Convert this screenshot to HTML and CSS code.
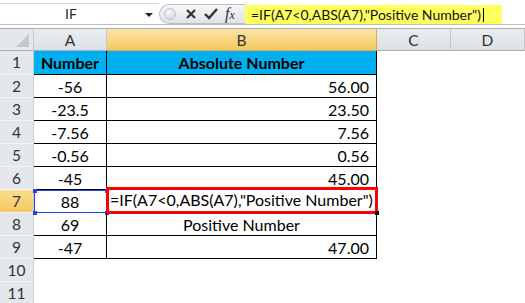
FILE: index.html
```html
<!DOCTYPE html>
<html lang="en">
<head>
    <meta charset="UTF-8">
    <title>IF ABS formula</title>
    <link rel="stylesheet" href="styles.css">
</head>
<body>
    <!-- formula bar -->
    <div class="formula-bar">
        <div class="name-box">IF<span class="name-arrow"></span></div>
        <div class="fx-buttons">
            <span class="grip"></span>
            <svg class="btn-icon" width="14" height="14" viewBox="0 0 14 14">
                <path d="M3 3 L11 11 M11 3 L3 11" stroke="#333" stroke-width="2.2" fill="none"/>
            </svg>
            <svg class="btn-icon" width="16" height="14" viewBox="0 0 16 14">
                <path d="M2 7 L6 11 L14 2" stroke="#333" stroke-width="2.4" fill="none"/>
            </svg>
            <span class="fx">f<span class="fx-x">x</span></span>
        </div>
        <div class="formula-input">=IF(A7&lt;0,ABS(A7),"Positive Number")<span class="caret"></span></div>
    </div>

    <!-- sheet -->
    <div class="sheet">
        <div class="corner"><span class="corner-tri"></span></div>
        <div class="col-head">A</div>
        <div class="col-head active">B</div>
        <div class="col-head">C</div>
        <div class="col-head last">D</div>

        <div class="row-head">1</div>
        <div class="cell title a">Number</div>
        <div class="cell title b">Absolute Number</div>
        <div class="blank"></div><div class="blank"></div>

        <div class="row-head">2</div>
        <div class="cell a">-56</div>
        <div class="cell b num">56.00</div>
        <div class="blank"></div><div class="blank"></div>

        <div class="row-head">3</div>
        <div class="cell a">-23.5</div>
        <div class="cell b num">23.50</div>
        <div class="blank"></div><div class="blank"></div>

        <div class="row-head">4</div>
        <div class="cell a">-7.56</div>
        <div class="cell b num">7.56</div>
        <div class="blank"></div><div class="blank"></div>

        <div class="row-head">5</div>
        <div class="cell a">-0.56</div>
        <div class="cell b num">0.56</div>
        <div class="blank"></div><div class="blank"></div>

        <div class="row-head">6</div>
        <div class="cell a">-45</div>
        <div class="cell b num">45.00</div>
        <div class="blank"></div><div class="blank"></div>

        <div class="row-head active">7</div>
        <div class="cell a ref">88
            <span class="ref-box">
                <span class="handle tl"></span><span class="handle tr"></span>
                <span class="handle bl"></span><span class="handle br"></span>
            </span>
        </div>
        <div class="cell b editing">
            <span class="edit-box">=IF(A7&lt;0,ABS(A7),"Positive Number")</span>
            <span class="fill-handle"></span>
        </div>
        <div class="blank"></div><div class="blank"></div>

        <div class="row-head">8</div>
        <div class="cell a">69</div>
        <div class="cell b">Positive Number</div>
        <div class="blank"></div><div class="blank"></div>

        <div class="row-head">9</div>
        <div class="cell a">-47</div>
        <div class="cell b num">47.00</div>
        <div class="blank"></div><div class="blank"></div>

        <div class="row-head">10</div>
        <div class="blank"></div><div class="blank"></div><div class="blank"></div><div class="blank"></div>

        <div class="row-head">11</div>
        <div class="blank"></div><div class="blank"></div><div class="blank"></div><div class="blank"></div>
    </div>
</body>
</html>
```

FILE: styles.css
```css
body {
    margin: 0;
    background: #fff;
    font-family: Lato, "Liberation Sans", sans-serif;
    width: 525px;
    height: 303px;
    overflow: hidden;
}

/* formula bar */
.formula-bar {
    display: flex;
    align-items: flex-start;
    height: 21px;
    padding-top: 3px;
    border-bottom: 1px solid #b9c0c8;
    margin-bottom: 3px;
}
.name-box {
    position: relative;
    box-sizing: border-box;
    width: 159px;
    height: 21px;
    border-top: 1px solid #d6dade;
    padding-right: 17px;
    text-align: center;
    font-size: 14px;
    line-height: 20px;
    color: #2b2b2b;
}
.name-arrow {
    position: absolute;
    right: 6px;
    top: 9px;
    border-left: 4px solid transparent;
    border-right: 4px solid transparent;
    border-top: 4px solid #222;
}
.fx-buttons {
    box-sizing: border-box;
    width: 86px;
    height: 20px;
    margin-top: 1px;
    display: flex;
    align-items: center;
    border: 1px solid #b9bfc7;
    border-right: none;
    border-radius: 10px 0 0 10px;
    background: linear-gradient(#f6f7f9, #dfe2e6);
}
.grip {
    width: 10px;
    height: 10px;
    margin-left: 4px;
    margin-right: 8px;
    border-radius: 50%;
    background: radial-gradient(circle at 40% 35%, #fafafa, #c9cdd2);
    border: 1px solid #c2c6cb;
}
.btn-icon {
    margin-right: 5px;
}
.fx {
    font-family: "Liberation Serif", serif;
    font-style: italic;
    font-size: 16px;
    color: #333;
    margin-left: 1px;
}
.fx-x {
    font-size: 12px;
}
.formula-input {
    box-sizing: border-box;
    width: 257px;
    height: 19px;
    margin-top: 2px;
    padding-left: 6px;
    background: #ffff5e;
    font-size: 14px;
    line-height: 19px;
    color: #111;
    white-space: nowrap;
}
.caret {
    display: inline-block;
    width: 1px;
    height: 14px;
    margin-left: 2px;
    vertical-align: -2px;
    background: #000;
}

/* sheet grid */
.sheet {
    display: grid;
    grid-template-columns: 34px 73px 270px 74px 74px;
    grid-template-rows: 22px 24px repeat(10, 23px);
    border-top: 1px solid #a6aeb8;
}
.corner {
    position: relative;
    box-sizing: border-box;
    background: #e4e7eb;
    border-right: 1px solid #c6cbd1;
    border-bottom: 1px solid #a9b0b9;
}
.corner-tri {
    position: absolute;
    right: 4px;
    bottom: 3px;
    border-left: 13px solid transparent;
    border-bottom: 13px solid #c4c8cd;
}
.col-head {
    box-sizing: border-box;
    background: linear-gradient(#e9ecef, #dde1e6);
    border-right: 1px solid #c2c7cd;
    border-bottom: 1px solid #a9b0b9;
    text-align: center;
    font-size: 15.5px;
    line-height: 22px;
    color: #333;
}
.col-head.active {
    background: linear-gradient(#fbe6a6, #f6c760);
    border-right-color: #e0a94c;
    border-bottom-color: #e9a53f;
}
.row-head {
    box-sizing: border-box;
    background: #e4e7eb;
    border-right: 1px solid #c6cbd1;
    border-bottom: 1px solid #f3f4f6;
    text-align: center;
    font-size: 15.5px;
    line-height: 23px;
    color: #333;
}
.row-head.active {
    background: linear-gradient(#f9dc8e, #f6c863);
}
.cell {
    position: relative;
    box-sizing: border-box;
    border-right: 1px solid #000;
    border-bottom: 1px solid #000;
    font-size: 16px;
    line-height: 23px;
    color: #000;
    text-align: center;
    white-space: nowrap;
}
.cell.num {
    text-align: right;
    padding-right: 7px;
}
.cell.title {
    background: #00b0f0;
    font-weight: bold;
}

/* A7 reference highlight */
.ref-box {
    position: absolute;
    top: 0;
    left: 0;
    right: -1px;
    bottom: -1px;
    border: 1px solid #1f3ff0;
}
.handle {
    position: absolute;
    width: 4px;
    height: 4px;
    background: #1f3ff0;
}
.handle.tl { left: -2px; top: -2px; }
.handle.tr { right: -3px; top: -2px; }
.handle.bl { left: -2px; bottom: -3px; }
.handle.br { right: -3px; bottom: -3px; }

/* B7 in edit mode */
.edit-box {
    position: absolute;
    top: -3px;
    left: -1px;
    right: -2px;
    bottom: -2px;
    border: 3px solid #ff0000;
    padding-left: 1px;
    text-align: left;
    line-height: 20px;
}
.fill-handle {
    position: absolute;
    right: -3px;
    bottom: -3px;
    width: 4px;
    height: 4px;
    background: #000;
}
```
